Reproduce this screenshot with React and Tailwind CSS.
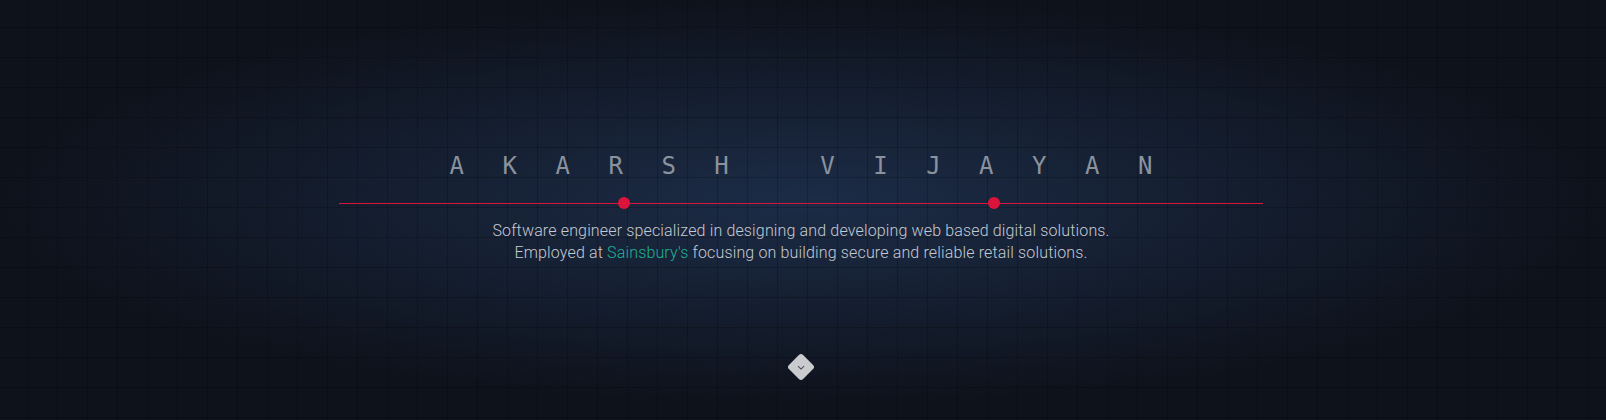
import { ChevronDown } from "lucide-react";

// Hero with a faint grid over a radial glow
export default function App() {
  return (
    <div className="h-screen w-full overflow-hidden bg-[#0e121b] bg-[image:linear-gradient(rgba(0,0,0,0.2)_1px,transparent_1px),linear-gradient(90deg,rgba(0,0,0,0.2)_1px,transparent_1px),radial-gradient(ellipse_closest-side_at_50%_48%,#1c2c47_0%,#0e121b_100%)] bg-[size:30px_30px,30px_30px,100%_100%] bg-[position:27px_27px,27px_27px,0_0]">
      <div className="flex flex-col items-center pt-[154px] pr-[4px]">
        <h1 className="pl-[38.5px] text-[24px] leading-[24px] tracking-[38.5px] text-[#8a929e] font-['DejaVu_Sans_Mono',monospace] font-normal whitespace-pre">
          AKARSH VIJAYAN
        </h1>

        <div className="relative mt-[19px] h-3 w-[924px]">
          <div className="absolute left-0 right-0 top-[5.5px] h-px bg-[#dc143c]" />
          <span className="absolute left-[calc(30%+2px)] top-0 h-3 w-3 rounded-full bg-[#dc143c]" />
          <span className="absolute left-[calc(70%+2px)] top-0 h-3 w-3 rounded-full bg-[#dc143c]" />
        </div>

        <p className="mt-[11px] text-center text-[16px] leading-[22px] font-light tracking-[0.15px] text-[#c4cad3] font-['Roboto','Liberation_Sans',sans-serif]">
          Software engineer specialized in designing and developing web based digital solutions.
          <br />
          Employed at <span className="text-[#20b294]">Sainsbury's</span> focusing on building secure and reliable retail solutions.
        </p>

        <button
          type="button"
          aria-label="Scroll down"
          className="mt-[92.5px] flex h-5 w-5 rotate-45 items-center justify-center rounded-[3px] bg-[#c9cbcf]"
        >
          <ChevronDown className="-rotate-45 text-[#4b5059]" size={11} strokeWidth={2.2} />
        </button>
      </div>
    </div>
  );
}
